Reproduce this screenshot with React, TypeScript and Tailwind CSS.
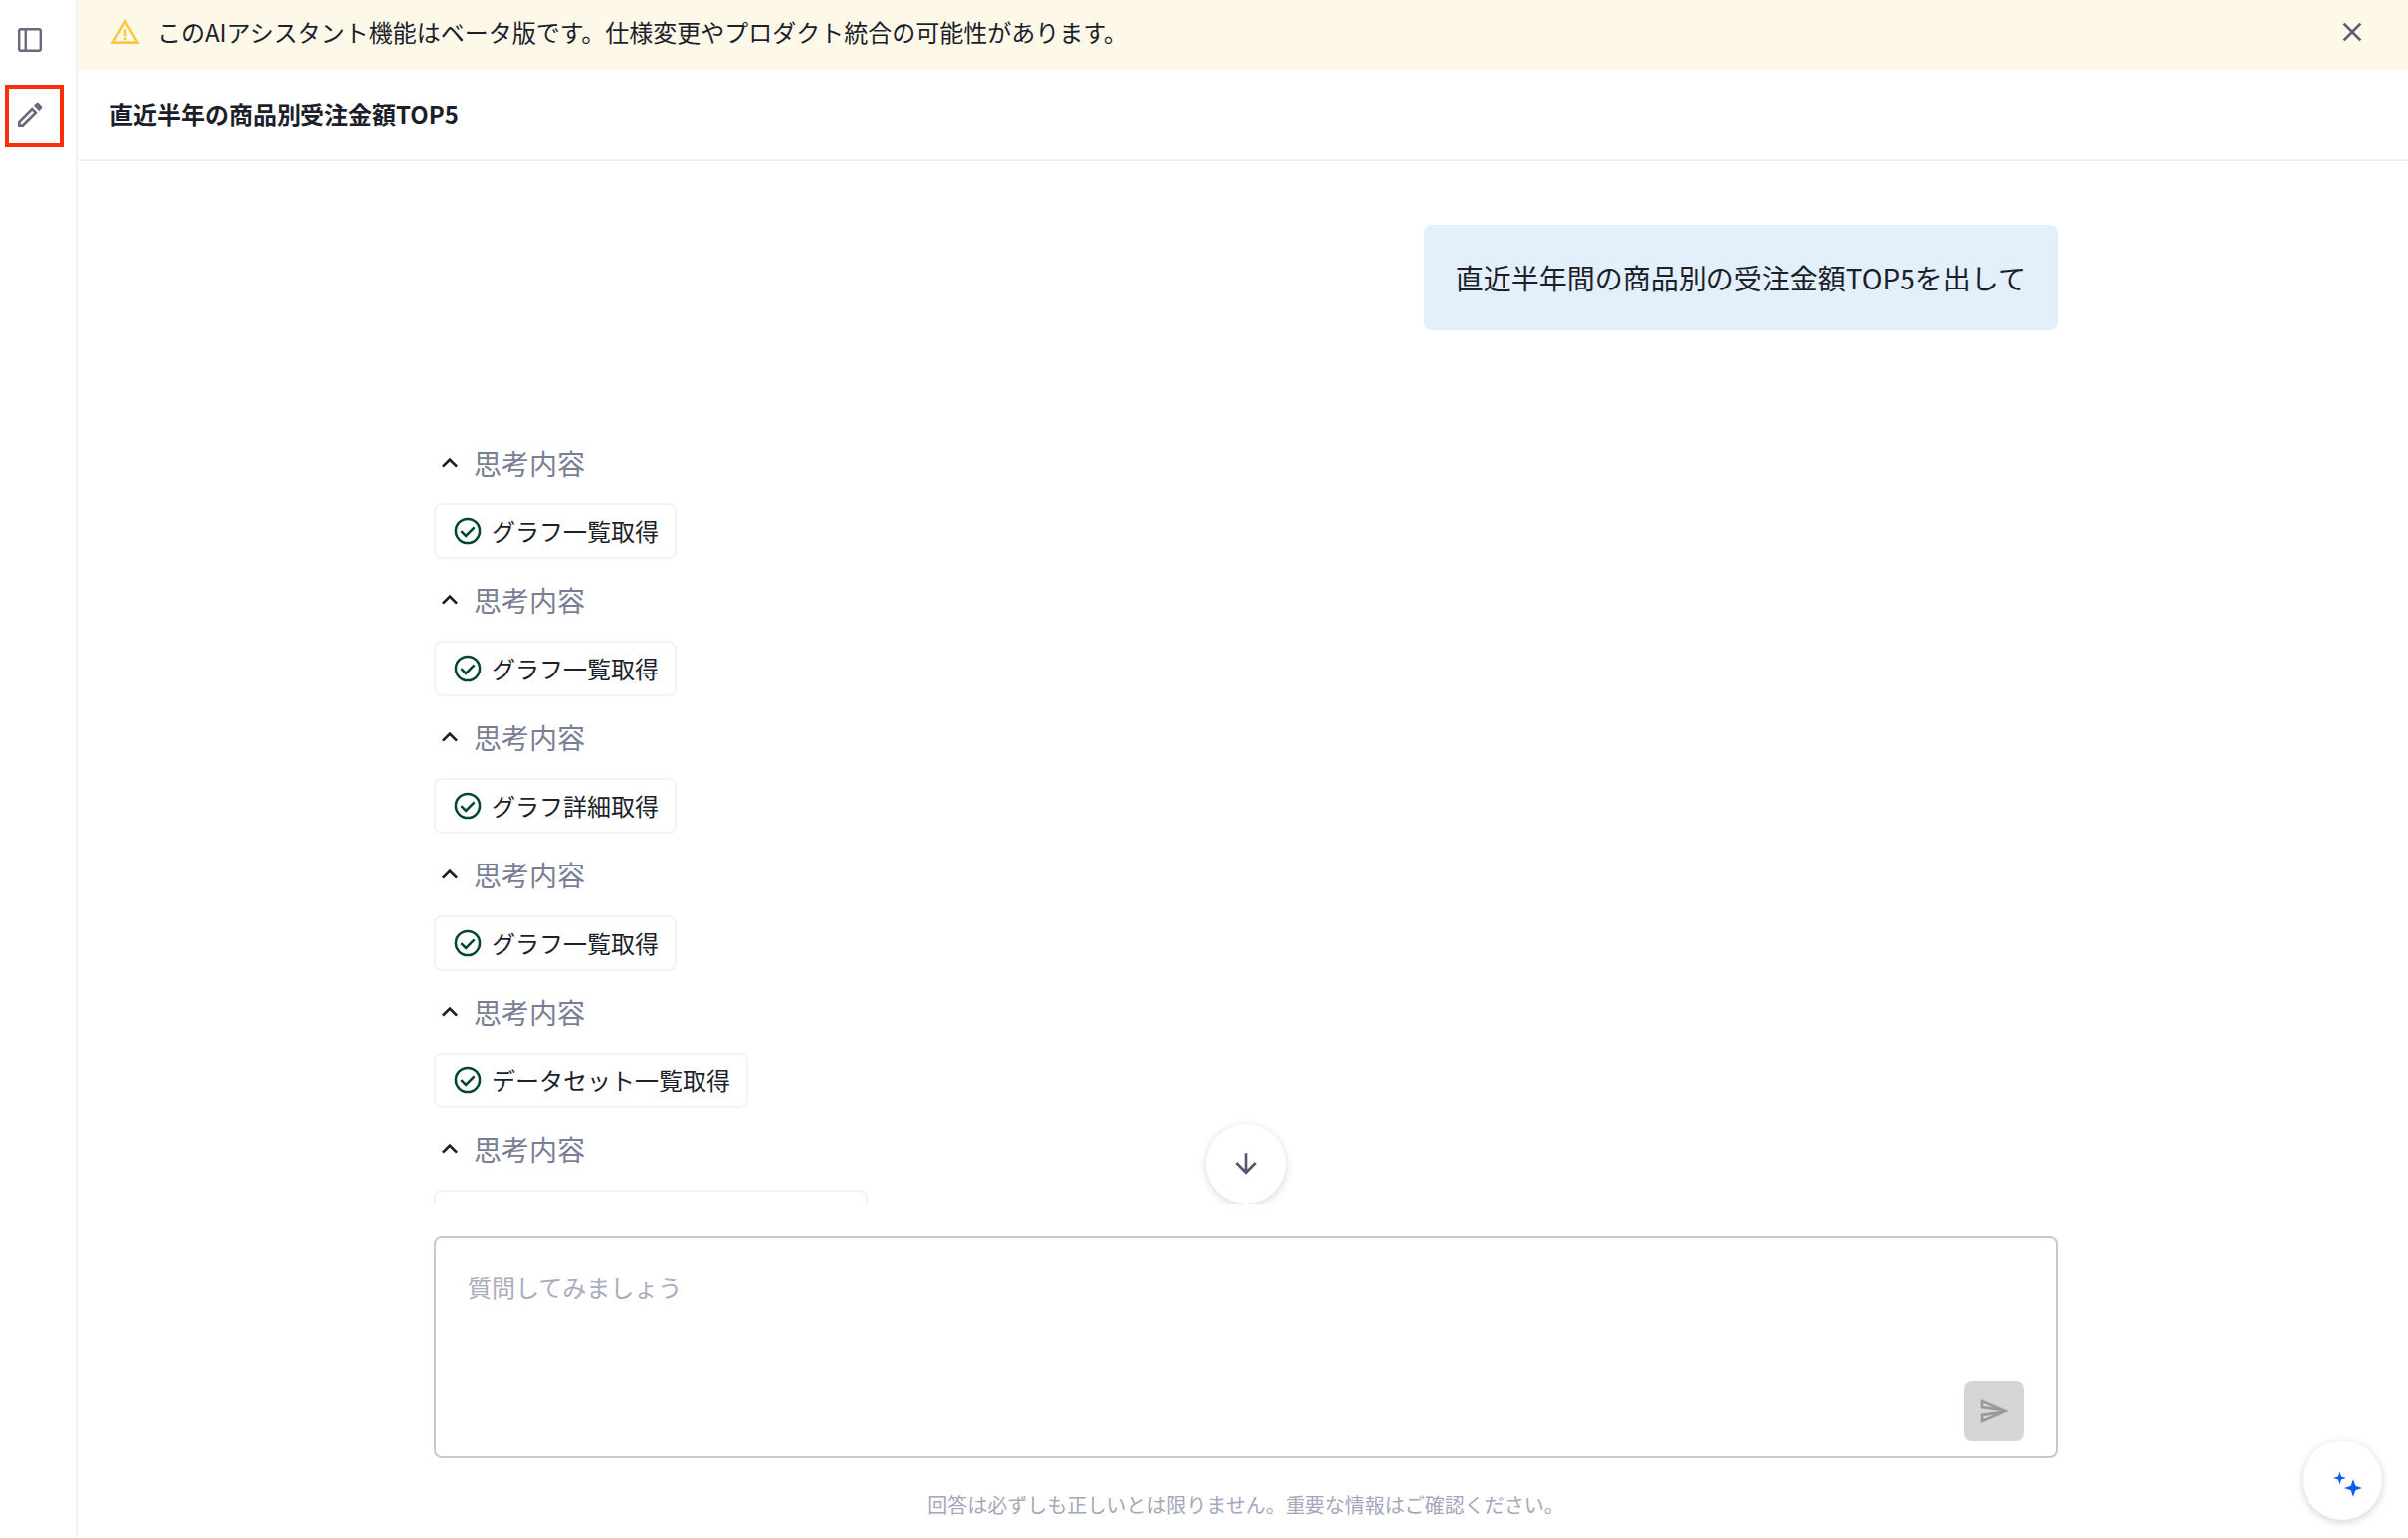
import React, { useState } from 'react'
import { MdArrowDownward, MdClose, MdExpandLess, MdOutlineSend, MdWarningAmber } from 'react-icons/md'

type Step = {
    id: number
    tool: string
}

const steps: Step[] = [
    { id: 1, tool: 'グラフ一覧取得' },
    { id: 2, tool: 'グラフ一覧取得' },
    { id: 3, tool: 'グラフ詳細取得' },
    { id: 4, tool: 'グラフ一覧取得' },
    { id: 5, tool: 'データセット一覧取得' },
    { id: 6, tool: '' },
]

function PanelIcon() {
    return (
        <svg viewBox="0 0 24 24" className="w-8 h-8" fill="none" stroke="currentColor" strokeWidth="1.8" aria-hidden="true">
            <rect x="3.9" y="3.9" width="16.2" height="16.2" rx="1.3" />
            <path d="M8.8 4v16" />
        </svg>
    )
}

function PencilIcon() {
    return (
        <svg viewBox="0 0 24 24" className="w-8 h-8" fill="currentColor" fillRule="evenodd" aria-hidden="true">
            <path d="M3 21v-4.100L13.700 6.200l4.100 4.100L7.100 21zM5 19h1.200L15 10.300 13.700 9 5 17.700z" />
            <path d="M14.900 5l1.700-1.700q.5-.5 1.100-.5t1.100.5l1.900 1.900q.5.5.5 1.100t-.5 1.100L19 9.100z" />
        </svg>
    )
}

function CheckIcon() {
    return (
        <svg viewBox="0 0 24 24" className="w-8 h-8 text-[#00472e]" fill="none" stroke="currentColor" strokeWidth="1.9" aria-hidden="true">
            <circle cx="12" cy="12" r="9.050" />
            <path d="M7 12.100l3.600 3.600 6.400-6.500" />
        </svg>
    )
}

function SparkleIcon() {
    return (
        <svg viewBox="0 0 32 32" className="w-8 h-8" fill="#0b5cf0" aria-hidden="true">
            <path d="M9.500 5.500l1.500 5 5 1.500-5 1.500-1.500 5-1.500-5-5-1.500 5-1.500z" />
            <path d="M23 13l2.300 6.700 6.700 2.300-6.700 2.300L23 31l-2.300-6.700L14 22l6.700-2.300z" />
        </svg>
    )
}

function ThinkingStep({ tool }: { tool: string }) {
    return (
        <li className="flex flex-col items-start gap-5">
            <button type="button" className="flex items-center gap-2 text-[28px] leading-[42px] text-[#7a7e95]">
                <MdExpandLess className="w-8 h-8 text-[#1a1c26]" />
                思考内容
            </button>
            {tool ? (
                <div className="flex items-center gap-2 h-14 px-4 rounded-lg border-2 border-[#f3f3f4] text-2xl">
                    <CheckIcon />
                    {tool}
                </div>
            ) : (
                <div className="w-[436px] h-14 rounded-lg border-2 border-[#f3f3f4]" />
            )}
        </li>
    )
}

export default function App() {
    const [showBanner, setShowBanner] = useState(true)
    const [question, setQuestion] = useState('')

    return (
        <div className="flex h-screen bg-white text-[#1c1f2b] font-['Noto_Sans_CJK_JP',sans-serif]">
            {/* Sidebar */}
            <nav className="w-[78px] shrink-0 flex flex-col items-start gap-11 pl-3.5 pt-6 border-r-2 border-[#f1f1f3] text-[#666a7c]">
                <button type="button" aria-label="サイドバーを開く">
                    <PanelIcon />
                </button>
                <button type="button" aria-label="新しいチャット" className="relative">
                    <PencilIcon />
                    <span className="absolute -top-[15px] -bottom-4 -left-[9px] -right-[18px] border-4 border-[#fb2c0a]" />
                </button>
            </nav>

            <div className="flex-1 min-w-0 flex flex-col">
                {showBanner && (
                    <div className="flex items-center gap-4 pl-8 pr-10 pt-3.5 pb-5 bg-[#fef8e9] text-2xl leading-9">
                        <MdWarningAmber className="w-8 h-8 text-[#f9c846]" />
                        <p className="flex-1">このAIアシスタント機能はベータ版です。仕様変更やプロダクト統合の可能性があります。</p>
                        <button type="button" aria-label="閉じる" className="text-[#5b5e70]" onClick={() => setShowBanner(false)}>
                            <MdClose className="w-8 h-8" />
                        </button>
                    </div>
                )}

                <header className="flex items-center h-[92px] px-8 border-b-2 border-[#f1f1f3]">
                    <h1 className="text-2xl font-bold">直近半年の商品別受注金額TOP5</h1>
                </header>

                {/* Conversation */}
                <main className="relative flex-1 min-h-0 overflow-hidden pl-1.5">
                    <div className="max-w-[1632px] mx-auto pt-16">
                        <p className="w-fit ml-auto p-8 rounded-lg bg-[#e3effb] text-[28px] leading-[42px]">
                            直近半年間の商品別の受注金額TOP5を出して
                        </p>
                        <ul className="mt-28 flex flex-col gap-5">
                            {steps.map((step) => (
                                <ThinkingStep key={step.id} tool={step.tool} />
                            ))}
                        </ul>
                    </div>
                    <div className="absolute inset-x-0 bottom-0 pl-1.5 flex justify-center pointer-events-none">
                        <button
                            type="button"
                            aria-label="一番下へ"
                            className="flex items-center justify-center w-20 h-20 rounded-full bg-white text-[#56596d] shadow-[0_2px_8px_rgba(0,0,0,0.16)] pointer-events-auto"
                        >
                            <MdArrowDownward className="w-8 h-8" />
                        </button>
                    </div>
                </main>

                {/* Composer */}
                <footer className="pl-1.5 pt-8 pb-[18px]">
                    <form
                        className="max-w-[1632px] mx-auto flex items-end gap-4 h-56 px-8 pb-4 rounded-lg border-2 border-[#c8c9d0]"
                        onSubmit={(e) => e.preventDefault()}
                    >
                        <textarea
                            aria-label="質問"
                            placeholder="質問してみましょう"
                            value={question}
                            onChange={(e) => setQuestion(e.target.value)}
                            className="flex-1 self-stretch pt-8 resize-none outline-none text-2xl leading-9 placeholder:text-[#a9acbd]"
                        />
                        <button
                            type="submit"
                            aria-label="送信"
                            disabled={!question}
                            className="flex items-center justify-center w-[60px] h-[60px] rounded-lg bg-[#d4d5d6] text-[#98999b]"
                        >
                            <MdOutlineSend className="w-8 h-8" />
                        </button>
                    </form>
                    <p className="mt-8 text-center text-xl leading-[30px] text-[#a4a8ba]">
                        回答は必ずしも正しいとは限りません。重要な情報はご確認ください。
                    </p>
                </footer>
            </div>

            <button
                type="button"
                aria-label="AIアシスタント"
                className="fixed right-[26px] bottom-[18px] flex items-center justify-center w-20 h-20 pl-2 pt-1 rounded-full bg-white shadow-[0_2px_8px_rgba(0,0,0,0.18)]"
            >
                <SparkleIcon />
            </button>
        </div>
    )
}
